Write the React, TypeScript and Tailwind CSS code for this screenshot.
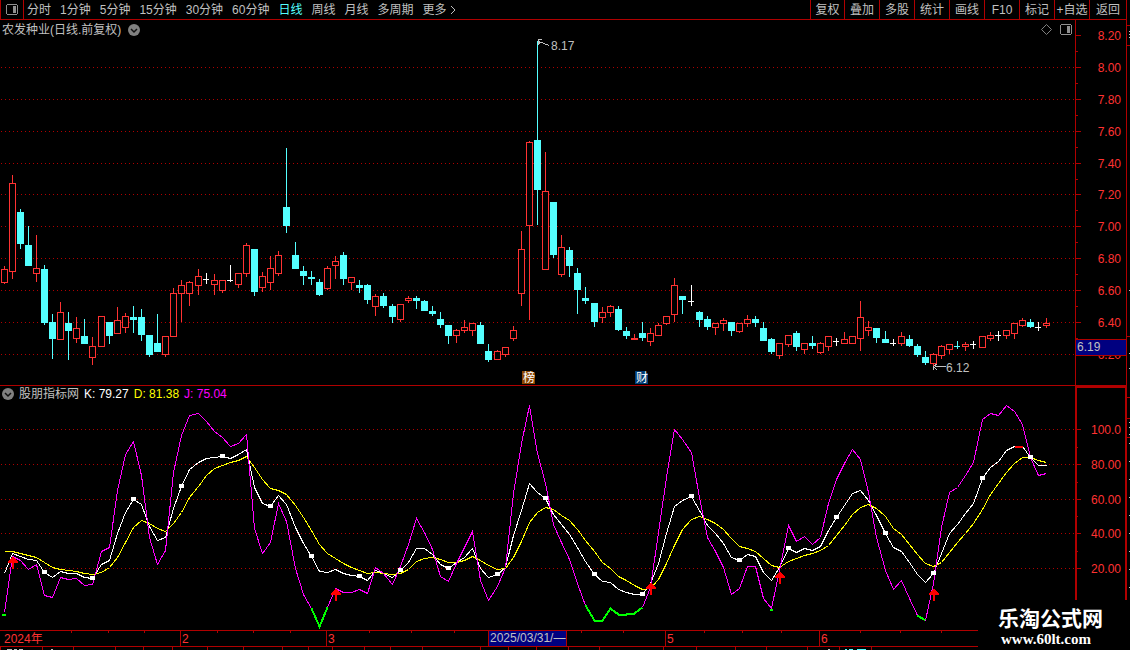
import clsx from "clsx";

const periods = [
  "分时",
  "1分钟",
  "5分钟",
  "15分钟",
  "30分钟",
  "60分钟",
  "日线",
  "周线",
  "月线",
  "多周期",
];

const tools = [
  "复权",
  "叠加",
  "多股",
  "统计",
  "画线",
  "F10",
  "标记",
  "+自选",
  "返回",
];

type Kind = "u" | "d" | "x" | "c";
type Candle = [Kind, number, number, number, number];

// kind (u = up, d = down, x = flat, c = flat down), high, body top, body bottom, low
const candles: Candle[] = [
  ["u", 266, 269, 283, 284], ["u", 175, 183, 272, 279], ["d", 209, 212, 244, 249], ["d", 226, 245, 266, 266],
  ["u", 235, 268, 274, 282], ["d", 265, 269, 323, 325], ["d", 314, 322, 339, 359], ["u", 302, 312, 340, 340],
  ["d", 312, 323, 331, 360], ["u", 317, 328, 339, 343], ["d", 319, 336, 344, 344], ["u", 337, 346, 358, 365],
  ["u", 316, 316, 347, 347], ["d", 322, 322, 336, 344], ["u", 307, 320, 334, 334], ["u", 313, 316, 328, 333],
  ["d", 306, 317, 320, 333], ["d", 309, 317, 335, 341], ["d", 335, 335, 355, 357], ["d", 314, 343, 352, 352],
  ["u", 336, 336, 355, 357], ["u", 288, 293, 337, 337], ["u", 280, 285, 294, 322], ["u", 281, 282, 294, 306],
  ["u", 269, 276, 286, 295], ["x", 273, 279, 280, 284], ["u", 274, 280, 285, 295], ["u", 280, 280, 291, 293],
  ["x", 265, 280, 281, 282], ["u", 273, 273, 285, 288], ["u", 243, 245, 274, 277], ["d", 249, 249, 292, 296],
  ["u", 272, 276, 288, 292], ["u", 256, 268, 283, 290], ["u", 251, 255, 274, 276], ["d", 148, 207, 226, 233],
  ["d", 242, 255, 269, 269], ["d", 266, 271, 276, 285], ["d", 271, 277, 279, 285], ["d", 279, 282, 295, 296],
  ["u", 266, 268, 289, 290], ["u", 256, 261, 266, 279], ["d", 252, 255, 279, 285], ["u", 277, 277, 283, 290],
  ["d", 280, 285, 288, 293], ["d", 284, 285, 300, 304], ["u", 294, 296, 307, 316], ["d", 293, 296, 306, 308],
  ["d", 304, 306, 317, 323], ["u", 304, 304, 320, 322], ["u", 296, 298, 301, 303], ["d", 296, 298, 301, 309],
  ["d", 300, 301, 311, 311], ["d", 306, 311, 314, 316], ["d", 312, 319, 325, 328], ["d", 325, 325, 336, 344],
  ["u", 329, 330, 336, 343], ["u", 320, 327, 331, 333], ["u", 323, 323, 331, 336], ["d", 322, 325, 344, 344],
  ["d", 344, 351, 360, 362], ["u", 350, 351, 360, 360], ["u", 347, 347, 355, 357], ["u", 326, 330, 339, 341],
  ["u", 231, 249, 294, 306], ["u", 141, 142, 226, 320], ["d", 41, 140, 190, 225], ["u", 152, 191, 270, 270],
  ["d", 202, 202, 255, 258], ["u", 235, 247, 275, 277], ["d", 247, 250, 266, 277], ["d", 268, 273, 290, 314],
  ["d", 287, 298, 301, 304], ["d", 303, 303, 322, 327], ["u", 307, 312, 318, 323], ["u", 305, 306, 313, 317],
  ["d", 306, 309, 330, 331], ["d", 327, 331, 336, 339], ["u", 334, 338, 340, 340], ["d", 322, 333, 338, 341],
  ["u", 328, 333, 342, 346], ["u", 323, 325, 336, 336], ["u", 316, 316, 324, 325], ["u", 278, 285, 315, 322],
  ["d", 296, 296, 300, 314], ["x", 285, 301, 302, 306], ["d", 311, 312, 320, 327], ["d", 316, 319, 327, 330],
  ["u", 323, 323, 328, 335], ["u", 318, 320, 324, 331], ["d", 322, 322, 331, 336], ["u", 323, 323, 332, 333],
  ["u", 315, 319, 324, 327], ["d", 316, 319, 323, 327], ["d", 322, 328, 341, 341], ["d", 338, 339, 352, 354],
  ["u", 343, 343, 356, 359], ["u", 335, 335, 345, 347], ["d", 331, 333, 347, 351], ["u", 343, 343, 350, 354],
  ["d", 336, 343, 346, 349], ["u", 342, 343, 353, 354], ["u", 336, 336, 347, 351], ["x", 338, 341, 342, 346],
  ["u", 332, 339, 344, 344], ["u", 336, 336, 344, 344], ["u", 301, 317, 339, 351], ["u", 321, 327, 331, 336],
  ["d", 328, 328, 338, 343], ["d", 331, 339, 343, 343], ["x", 339, 343, 344, 346], ["u", 332, 336, 344, 346],
  ["d", 335, 339, 346, 347], ["d", 344, 346, 355, 357], ["d", 351, 357, 363, 365], ["u", 353, 354, 364, 366],
  ["u", 345, 346, 356, 359], ["u", 344, 344, 350, 354], ["c", 341, 346, 347, 349], ["u", 342, 344, 347, 351],
  ["x", 341, 344, 345, 349], ["u", 336, 336, 348, 348], ["u", 332, 335, 339, 341], ["x", 331, 335, 336, 341],
  ["u", 330, 330, 336, 339], ["u", 323, 323, 334, 339], ["u", 318, 320, 326, 327], ["d", 319, 322, 327, 328],
  ["x", 322, 327, 328, 331], ["u", 318, 323, 326, 328],
];

const kLine = [
  573, 553, 556, 559, 560, 572, 577, 571, 573, 573, 577, 578, 564, 560, 533, 512, 499, 504, 526, 540,
  537, 508, 486, 469, 462, 458, 457, 456, 458, 454, 449, 487, 503, 506, 495, 504, 527, 543, 556, 571,
  572, 569, 573, 575, 576, 580, 570, 573, 577, 570, 562, 548, 548, 554, 564, 568, 562, 557, 548, 568,
  577, 574, 567, 535, 510, 483, 492, 498, 514, 524, 534, 547, 561, 574, 581, 582, 589, 592, 594, 594,
  583, 563, 533, 506, 500, 496, 510, 525, 533, 543, 557, 560, 554, 556, 572, 580, 567, 548, 552, 548,
  550, 546, 530, 517, 505, 493, 490, 500, 515, 533, 547, 551, 562, 574, 582, 573, 553, 533, 524, 513,
  503, 478, 467, 461, 450, 446, 446, 457, 465, 465,
];

const dLine = [
  551, 551, 553, 555, 557, 562, 567, 569, 570, 571, 573, 574, 572, 567, 557, 542, 527, 520, 523, 528,
  531, 523, 512, 497, 486, 475, 468, 465, 462, 460, 456, 467, 479, 488, 490, 494, 505, 517, 530, 544,
  553, 558, 563, 567, 570, 573, 572, 573, 574, 573, 569, 561, 558, 557, 559, 562, 562, 560, 556, 560,
  565, 569, 568, 557, 541, 522, 512, 507, 509, 515, 520, 529, 540, 551, 562, 568, 576, 580, 585, 589,
  588, 579, 563, 545, 529, 519, 516, 519, 523, 529, 538, 546, 548, 551, 558, 565, 567, 561, 558, 555,
  553, 550, 545, 535, 525, 514, 507, 504, 508, 516, 528, 534, 544, 554, 563, 566, 562, 552, 542, 533,
  523, 509, 494, 483, 472, 463, 457, 457, 460, 462,
];

const jLine = [
  612, 556, 560, 569, 564, 595, 597, 577, 579, 578, 585, 584, 551, 547, 490, 454, 441, 475, 537, 564,
  550, 472, 435, 415, 413, 421, 431, 437, 446, 443, 434, 528, 553, 542, 503, 521, 568, 594, 608, 626,
  607, 588, 592, 592, 589, 593, 567, 573, 584, 566, 544, 518, 532, 549, 576, 581, 563, 547, 531, 580,
  600, 586, 567, 493, 443, 405, 453, 483, 524, 542, 559, 583, 605, 620, 620, 608, 614, 614, 613, 607,
  587, 532, 477, 429, 439, 452, 497, 537, 551, 567, 594, 588, 566, 566, 598, 608, 570, 525, 541, 536,
  544, 537, 503, 479, 463, 449, 459, 492, 537, 570, 589, 580, 598, 615, 620, 583, 527, 492, 487, 475,
  462, 419, 413, 415, 405, 411, 424, 457, 475, 473,
];

const markers = [
  5, 11, 16, 22, 27, 33, 38, 44, 49, 55, 61, 67, 73, 79, 85, 91, 97, 103, 109, 115, 121, 127,
];

const buySignals = [
  { x: 13, y: 556 },
  { x: 336, y: 588 },
  { x: 651, y: 582 },
  { x: 780, y: 571 },
  { x: 934, y: 588 },
];

const priceTicks = [
  { y: 35, label: "8.20" },
  { y: 67, label: "8.00" },
  { y: 99, label: "7.80" },
  { y: 131, label: "7.60" },
  { y: 163, label: "7.40" },
  { y: 194, label: "7.20" },
  { y: 226, label: "7.00" },
  { y: 258, label: "6.80" },
  { y: 290, label: "6.60" },
  { y: 322, label: "6.40" },
  { y: 354, label: "6.20" },
];

const kdjTicks = [
  { y: 429, label: "100.0" },
  { y: 464, label: "80.00" },
  { y: 499, label: "60.00" },
  { y: 533, label: "40.00" },
  { y: 568, label: "20.00" },
];

const minorTicks = [
  51, 83, 115, 147, 179, 210, 242, 274, 306, 338, 447, 482, 516, 551,
];

const months = [
  { x: 180, label: "2" },
  { x: 326, label: "3" },
  { x: 665, label: "5" },
  { x: 819, label: "6" },
];

const weekTicks = [
  71, 108, 144, 217, 253, 290, 369, 411, 454, 581, 623, 704, 742, 781, 860, 900, 941,
];

const tabEdges = [
  0, 42, 73, 115, 143, 172, 207, 243, 282, 308, 332, 364, 390, 422, 480, 508,
  536, 568, 599, 663, 696, 735, 766, 807, 839, 871,
];

const barX = (i: number) => Math.floor(4.079 + i * 8.082);

const toPoints = (line: number[], from = 0, to = line.length - 1) =>
  line
    .slice(from, to + 1)
    .map((y, i) => `${barX(from + i)},${y}`)
    .join(" ");

const GridLine = ({ y }: { y: number }) => (
  <line
    x1="1"
    x2="100%"
    y1={y}
    y2={y}
    transform="translate(0 0.5)"
    stroke="#b00000"
    strokeDasharray="1 3"
  />
);

const CandleBar = ({ candle, x }: { candle: Candle; x: number }) => {
  const [kind, high, top, bottom, low] = candle;
  if (kind === "x" || kind === "c") {
    const color = kind === "x" ? "#ffffff" : "#54ffff";
    return (
      <g fill={color}>
        <rect x={x} y={high} width="1" height={low - high} />
        <rect x={x - 3} y={top} width="6" height="1" />
      </g>
    );
  }
  return (
    <g fill={kind === "u" ? "#ff3232" : "#54ffff"}>
      <rect x={x} y={high} width="1" height={low - high} />
      <rect x={x - 3} y={top} width="7" height={bottom - top} />
      {kind === "u" && bottom - top > 2 && (
        <rect x={x - 2} y={top + 1} width="5" height={bottom - top - 2} fill="#000" />
      )}
    </g>
  );
};

const NewsBadge = ({ x, label, fill }: { x: number; label: string; fill: string }) => (
  <g>
    <path d={`M${x} 371h11v2h2v11h-13z`} fill={fill} />
    <text x={x + 1} y="382" fill="#fff" fontSize="12">
      {label}
    </text>
  </g>
);

const PriceChart = () => (
  <svg className="block w-full h-[346px]" shapeRendering="crispEdges" role="img" aria-label="日线">
    <g transform="translate(0 -39)">
      {priceTicks.slice(1).map((tick) => (
        <GridLine key={tick.y} y={tick.y} />
      ))}
      {candles.map((candle, i) => (
        <CandleBar key={i} candle={candle} x={barX(i)} />
      ))}
      <g fill="none" stroke="#c0c0c0" transform="translate(0.5 0.5)">
        <path d="M549 45L538 41M541 39H538V44M538 41L540 44" />
        <path d="M945 366H934M937 363L933 366L937 370M933 366V369" />
      </g>
      <text x="551" y="50" fill="#c0c0c0" fontSize="12">
        8.17
      </text>
      <text x="946" y="372" fill="#c0c0c0" fontSize="12">
        6.12
      </text>
      <NewsBadge x={522} label="榜" fill="#8a4500" />
      <NewsBadge x={635} label="财" fill="#003c74" />
    </g>
  </svg>
);

const KdjChart = () => (
  <svg className="block w-full h-[228px]" shapeRendering="crispEdges" role="img" aria-label="KDJ">
    <g transform="translate(0 -402)">
      {kdjTicks.map((tick) => (
        <GridLine key={tick.y} y={tick.y} />
      ))}
      <g fill="none" transform="translate(0.5 0.5)">
        <polyline points={toPoints(kLine)} stroke="#ffffff" />
        <polyline points={toPoints(dLine)} stroke="#ffff00" />
        <polyline points={toPoints(jLine)} stroke="#ff00ff" />
        {/* oversold stretches of J */}
        <g stroke="#00ff00" strokeWidth="2">
          <polyline points={toPoints(jLine, 38, 40)} />
          <polyline points={toPoints(jLine, 72, 79)} />
          <polyline points={toPoints(jLine, 113, 114)} />
          <path d="M1 614H5M769 609H772" />
        </g>
        <polyline points={toPoints(kLine, 125, 126)} stroke="#ff0000" strokeWidth="2" />
      </g>
      {markers.map((i) => (
        <rect key={i} x={barX(i) - 2} y={kLine[i] - 2} width="5" height="4" fill="#fff" />
      ))}
      {buySignals.map(({ x, y }) => (
        <path key={x} d={`M${x} ${y}l5 6v1h-4v6h-2v-6h-4v-1z`} fill="#ff0000" />
      ))}
    </g>
  </svg>
);

const ValueAxis = () => (
  <svg className="block w-[55px] h-[610px] shrink-0" shapeRendering="crispEdges">
    <g transform="translate(-1075 -20)">
      <g fill="#b00000">
        <rect x="1075" y="20" width="1" height="610" />
        <rect x="1126" y="20" width="1" height="610" />
        <rect x="1075" y="385" width="52" height="1" />
        <rect x="1075" y="386" width="52" height="2" />
        <rect x="1075" y="386" width="2" height="244" />
        <rect x="1125" y="386" width="2" height="244" />
        {[...priceTicks, ...kdjTicks].map((tick) => (
          <rect key={tick.y} x="1076" y={tick.y} width="5" height="1" />
        ))}
        {minorTicks.map((y) => (
          <rect key={y} x="1076" y={y} width="2" height="1" />
        ))}
        {[25, 45, 336, 397, 418, 437].map((y) => (
          <rect key={y} x="1127" y={y} width="3" height="1" />
        ))}
      </g>
      <g fill="#c0c0c0">
        {[31, 34, 37, 290, 353, 368, 422, 427, 434, 443, 461, 479, 497, 515, 533, 551, 569, 587].map((y) => (
          <rect key={y} x="1129" y={y} width="1" height="1" />
        ))}
      </g>
      <g fill="#ff3232" fontSize="12" textAnchor="end">
        {[...priceTicks, ...kdjTicks].map((tick) => (
          <text key={tick.y} x="1121" y={tick.y + 5}>
            {tick.label}
          </text>
        ))}
      </g>
      <rect x="1075" y="339" width="52" height="17" fill="#b00000" />
      <rect x="1076" y="340" width="50" height="15" fill="#000080" />
      <text x="1077" y="351" fill="#c0c0c0" fontSize="12">
        6.19
      </text>
    </g>
  </svg>
);

const TimeAxis = () => (
  <svg className="block w-full h-[20px]" shapeRendering="crispEdges">
    <g fill="#b00000">
      <rect width="100%" height="1" />
      <rect y="16" width="100%" height="1" />
      {months.map((month) => (
        <rect key={month.x} x={month.x} width="1" height="16" />
      ))}
      {weekTicks.map((x) => (
        <rect key={x} x={x} width="1" height="3" />
      ))}
      {tabEdges.map((x) => (
        <rect key={x} x={x} y="17" width="1" height="3" />
      ))}
      <rect x="488" width="79" height="17" />
    </g>
    <rect x="489" y="1" width="77" height="15" fill="#000080" />
    <g fill="#ff3232" fontSize="12">
      <text x="4" y="13">
        2024年
      </text>
      {months.map((month) => (
        <text key={month.x} x={month.x + 2} y="13">
          {month.label}
        </text>
      ))}
    </g>
    <text x="490" y="12" fill="#c0c0c0" fontSize="12">
      2025/03/31/—
    </text>
    <path d="M7 19.5h5m2 0h3m2 0h4M51 19.5h2M828 19.5h2" stroke="#c0c0c0" />
    <path d="M845 19.5h2m2 0h4m4 0h9" stroke="#54ffff" />
  </svg>
);

const PanelIcon = () => (
  <svg width="12" height="11" fill="none" shapeRendering="crispEdges">
    <path d="M1.5 .5h9l1 1v8l-1 1h-9l-1-1v-8z" stroke="#909090" />
    <rect x="7" y="2" width="3" height="7" fill="#909090" />
  </svg>
);

const ChevronIcon = () => (
  <svg width="12" height="12" fill="none">
    <circle cx="6" cy="6" r="6" fill="#808080" />
    <path d="M3 5l3 3l3-3" stroke="#101010" strokeWidth="1.5" />
  </svg>
);

const Toolbar = () => (
  <header className="flex h-5 pr-[3px] whitespace-nowrap">
    <div className="flex flex-1 border-b border-[#b00000]">
      <button
        aria-label="侧栏"
        className="w-6 flex items-center justify-center border-x border-[#b00000]"
      >
        <PanelIcon />
      </button>
      <nav className="flex items-center gap-[9px] pl-[3px]">
        {periods.map((period) => (
          <button
            key={period}
            className={clsx(period === "日线" ? "text-[#54ffff]" : "hover:text-white")}
          >
            {period}
          </button>
        ))}
        <button className="flex items-center gap-[3px] hover:text-white">
          更多
          <svg width="6" height="10" fill="none" stroke="#c0c0c0">
            <path d="M1 1l4 4l-4 4" />
          </svg>
        </button>
      </nav>
    </div>
    <div className="flex border-b border-r border-[#b00000]">
      {tools.map((tool) => (
        <button
          key={tool}
          className="w-[35px] first:w-[34px] last:w-[37px] text-center border-l border-[#b00000] hover:text-white"
        >
          {tool}
        </button>
      ))}
    </div>
  </header>
);

const App = () => {
  return (
    <div className="relative w-full overflow-hidden bg-black text-[#c0c0c0] text-[12px] leading-[18px] font-['Liberation_Sans','Noto_Sans_CJK_SC',sans-serif]">
      <Toolbar />
      <main className="flex">
        <div className="flex-1 min-w-0">
          <div className="flex items-center h-[19px] pl-[2px] pr-[3px]">
            <h1>农发种业(日线.前复权)</h1>
            <button aria-label="展开" className="ml-[7px]">
              <ChevronIcon />
            </button>
            <div className="ml-auto flex items-center gap-2">
              <button aria-label="标注">
                <svg width="11" height="11" fill="none" stroke="#808080">
                  <path d="M5.5 .5l5 5l-5 5l-5-5z" />
                </svg>
              </button>
              <button aria-label="面板">
                <PanelIcon />
              </button>
            </div>
          </div>
          <PriceChart />
          <div className="flex items-center h-[17px] pl-[2px] gap-[5px] border-t border-[#b00000]">
            <button aria-label="指标">
              <ChevronIcon />
            </button>
            <h2>股朋指标网</h2>
            <span className="text-white">K: 79.27</span>
            <span className="text-[#ffff00]">D: 81.38</span>
            <span className="text-[#ff00ff]">J: 75.04</span>
          </div>
          <KdjChart />
        </div>
        <ValueAxis />
      </main>
      <TimeAxis />
      <div className="absolute right-0 bottom-0 w-[152px] h-[50px] pt-2 pl-5 bg-black text-white font-bold">
        <p className="text-[21px] leading-[22px] whitespace-nowrap">乐淘公式网</p>
        <p className="pl-[3px] text-[15px] leading-[18px] font-['Liberation_Serif',serif]">
          www.60lt.com
        </p>
      </div>
    </div>
  );
};

export default App;
